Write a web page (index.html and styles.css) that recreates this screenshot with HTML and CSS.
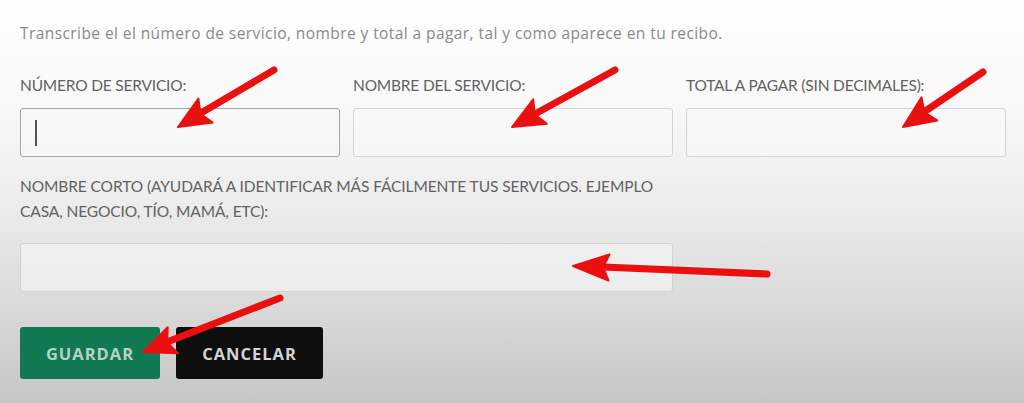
FILE: index.html
```html
<!DOCTYPE html>
<html lang="es">
<head>
<meta charset="utf-8">
<title>Servicio</title>
<link rel="stylesheet" href="styles.css">
</head>
<body>
<div class="page">
  <p class="intro">Transcribe el el número de servicio, nombre y total a pagar, tal y como aparece en tu recibo.</p>
  <div class="row3">
    <div class="field">
      <label class="lbl">NÚMERO DE SERVICIO:</label>
      <div class="input focused"><span class="caret"></span></div>
    </div>
    <div class="field">
      <label class="lbl">NOMBRE DEL SERVICIO:</label>
      <div class="input"></div>
    </div>
    <div class="field">
      <label class="lbl">TOTAL A PAGAR (SIN DECIMALES):</label>
      <div class="input"></div>
    </div>
  </div>
  <div class="field wide">
    <label class="lbl two">NOMBRE CORTO (AYUDARÁ A IDENTIFICAR MÁS FÁCILMENTE TUS SERVICIOS. EJEMPLO<br>CASA, NEGOCIO, TÍO, MAMÁ, ETC):</label>
    <div class="input"></div>
  </div>
  <div class="actions">
    <button class="btn save">GUARDAR</button>
    <button class="btn cancel">CANCELAR</button>
  </div>
  <svg class="arrows" width="1024" height="403" viewBox="0 0 1024 403">
    <g fill="#ea1010" stroke="#ea1010" stroke-linecap="round" stroke-linejoin="round">
      <line x1="274" y1="70" x2="201" y2="113" stroke-width="7"/>
      <polygon points="178,127 198.4,98.6 200.4,113.7 212.7,122.6" stroke-width="2"/>
      <line x1="615" y1="70" x2="535" y2="114" stroke-width="7"/>
      <polygon points="512,127 533.2,99.3 534.8,114.4 546.8,123.8" stroke-width="2"/>
      <line x1="983" y1="72" x2="924" y2="112" stroke-width="7"/>
      <polygon points="903,127 921.5,97.4 924.4,112.3 937.3,120.4" stroke-width="2"/>
      <line x1="767" y1="274" x2="603" y2="267" stroke-width="7"/>
      <polygon points="573,266 609.5,254.5 603,267.2 608.5,280.5" stroke-width="2"/>
      <line x1="280" y1="298" x2="167" y2="342" stroke-width="7"/>
      <polygon points="143,352 167.7,327.3 167.2,342.5 177.9,353.3" stroke-width="2"/>
    </g>
  </svg>
</div>
</body>
</html>
```
FILE: styles.css
```css
html, body {
  margin: 0;
  padding: 0;
}
body {
  width: 1024px;
  height: 403px;
  overflow: hidden;
  background: linear-gradient(to bottom, #fefefe 0%, #f9f9f9 25%, #ededed 50%, #dadada 75%, #c6c6c6 100%);
  font-family: "Lato", "Open Sans", sans-serif;
}
.page {
  position: relative;
  width: 1024px;
  height: 403px;
  padding: 23px 20px 0 20px;
  box-sizing: border-box;
}
.intro {
  margin: 0;
  font-family: "Open Sans", sans-serif;
  font-size: 15.5px;
  line-height: 20px;
  color: #8a8a8a;
  letter-spacing: 0.42px;
  white-space: nowrap;
}
.row3 {
  display: grid;
  grid-template-columns: repeat(3, 320px);
  column-gap: 13px;
  margin-top: 31px;
}
.field {
  display: flex;
  flex-direction: column;
}
.lbl {
  font-size: 15.5px;
  line-height: 22px;
  color: #626262;
  letter-spacing: -0.2px;
  margin-bottom: 12px;
  white-space: nowrap;
}
.lbl.two {
  line-height: 25px;
  margin-bottom: 19px;
  letter-spacing: -0.1px;
}
.input {
  height: 49px;
  box-sizing: border-box;
  border: 1px solid #d2d2d2;
  border-radius: 3px;
  background: rgba(250, 250, 250, 0.55);
  display: flex;
  align-items: center;
  padding-left: 14px;
}
.input.focused {
  border-color: #a5a5a5;
}
.caret {
  width: 1.5px;
  height: 26px;
  background: #555;
}
.wide {
  width: 653px;
  margin-top: 17px;
}
.actions {
  display: flex;
  gap: 16px;
  margin-top: 35px;
}
.btn {
  height: 52px;
  border: none;
  border-radius: 3px;
  font-family: "Open Sans", sans-serif;
  font-weight: 700;
  font-size: 16.5px;
  letter-spacing: 1px;
  padding: 0;
}
.save {
  width: 140px;
  background: #127a52;
  color: #b7d2c4;
}
.cancel {
  width: 147px;
  background: #0e0e0e;
  color: #d4d4d4;
}
.arrows {
  position: absolute;
  left: 0;
  top: 0;
  pointer-events: none;
}
```
